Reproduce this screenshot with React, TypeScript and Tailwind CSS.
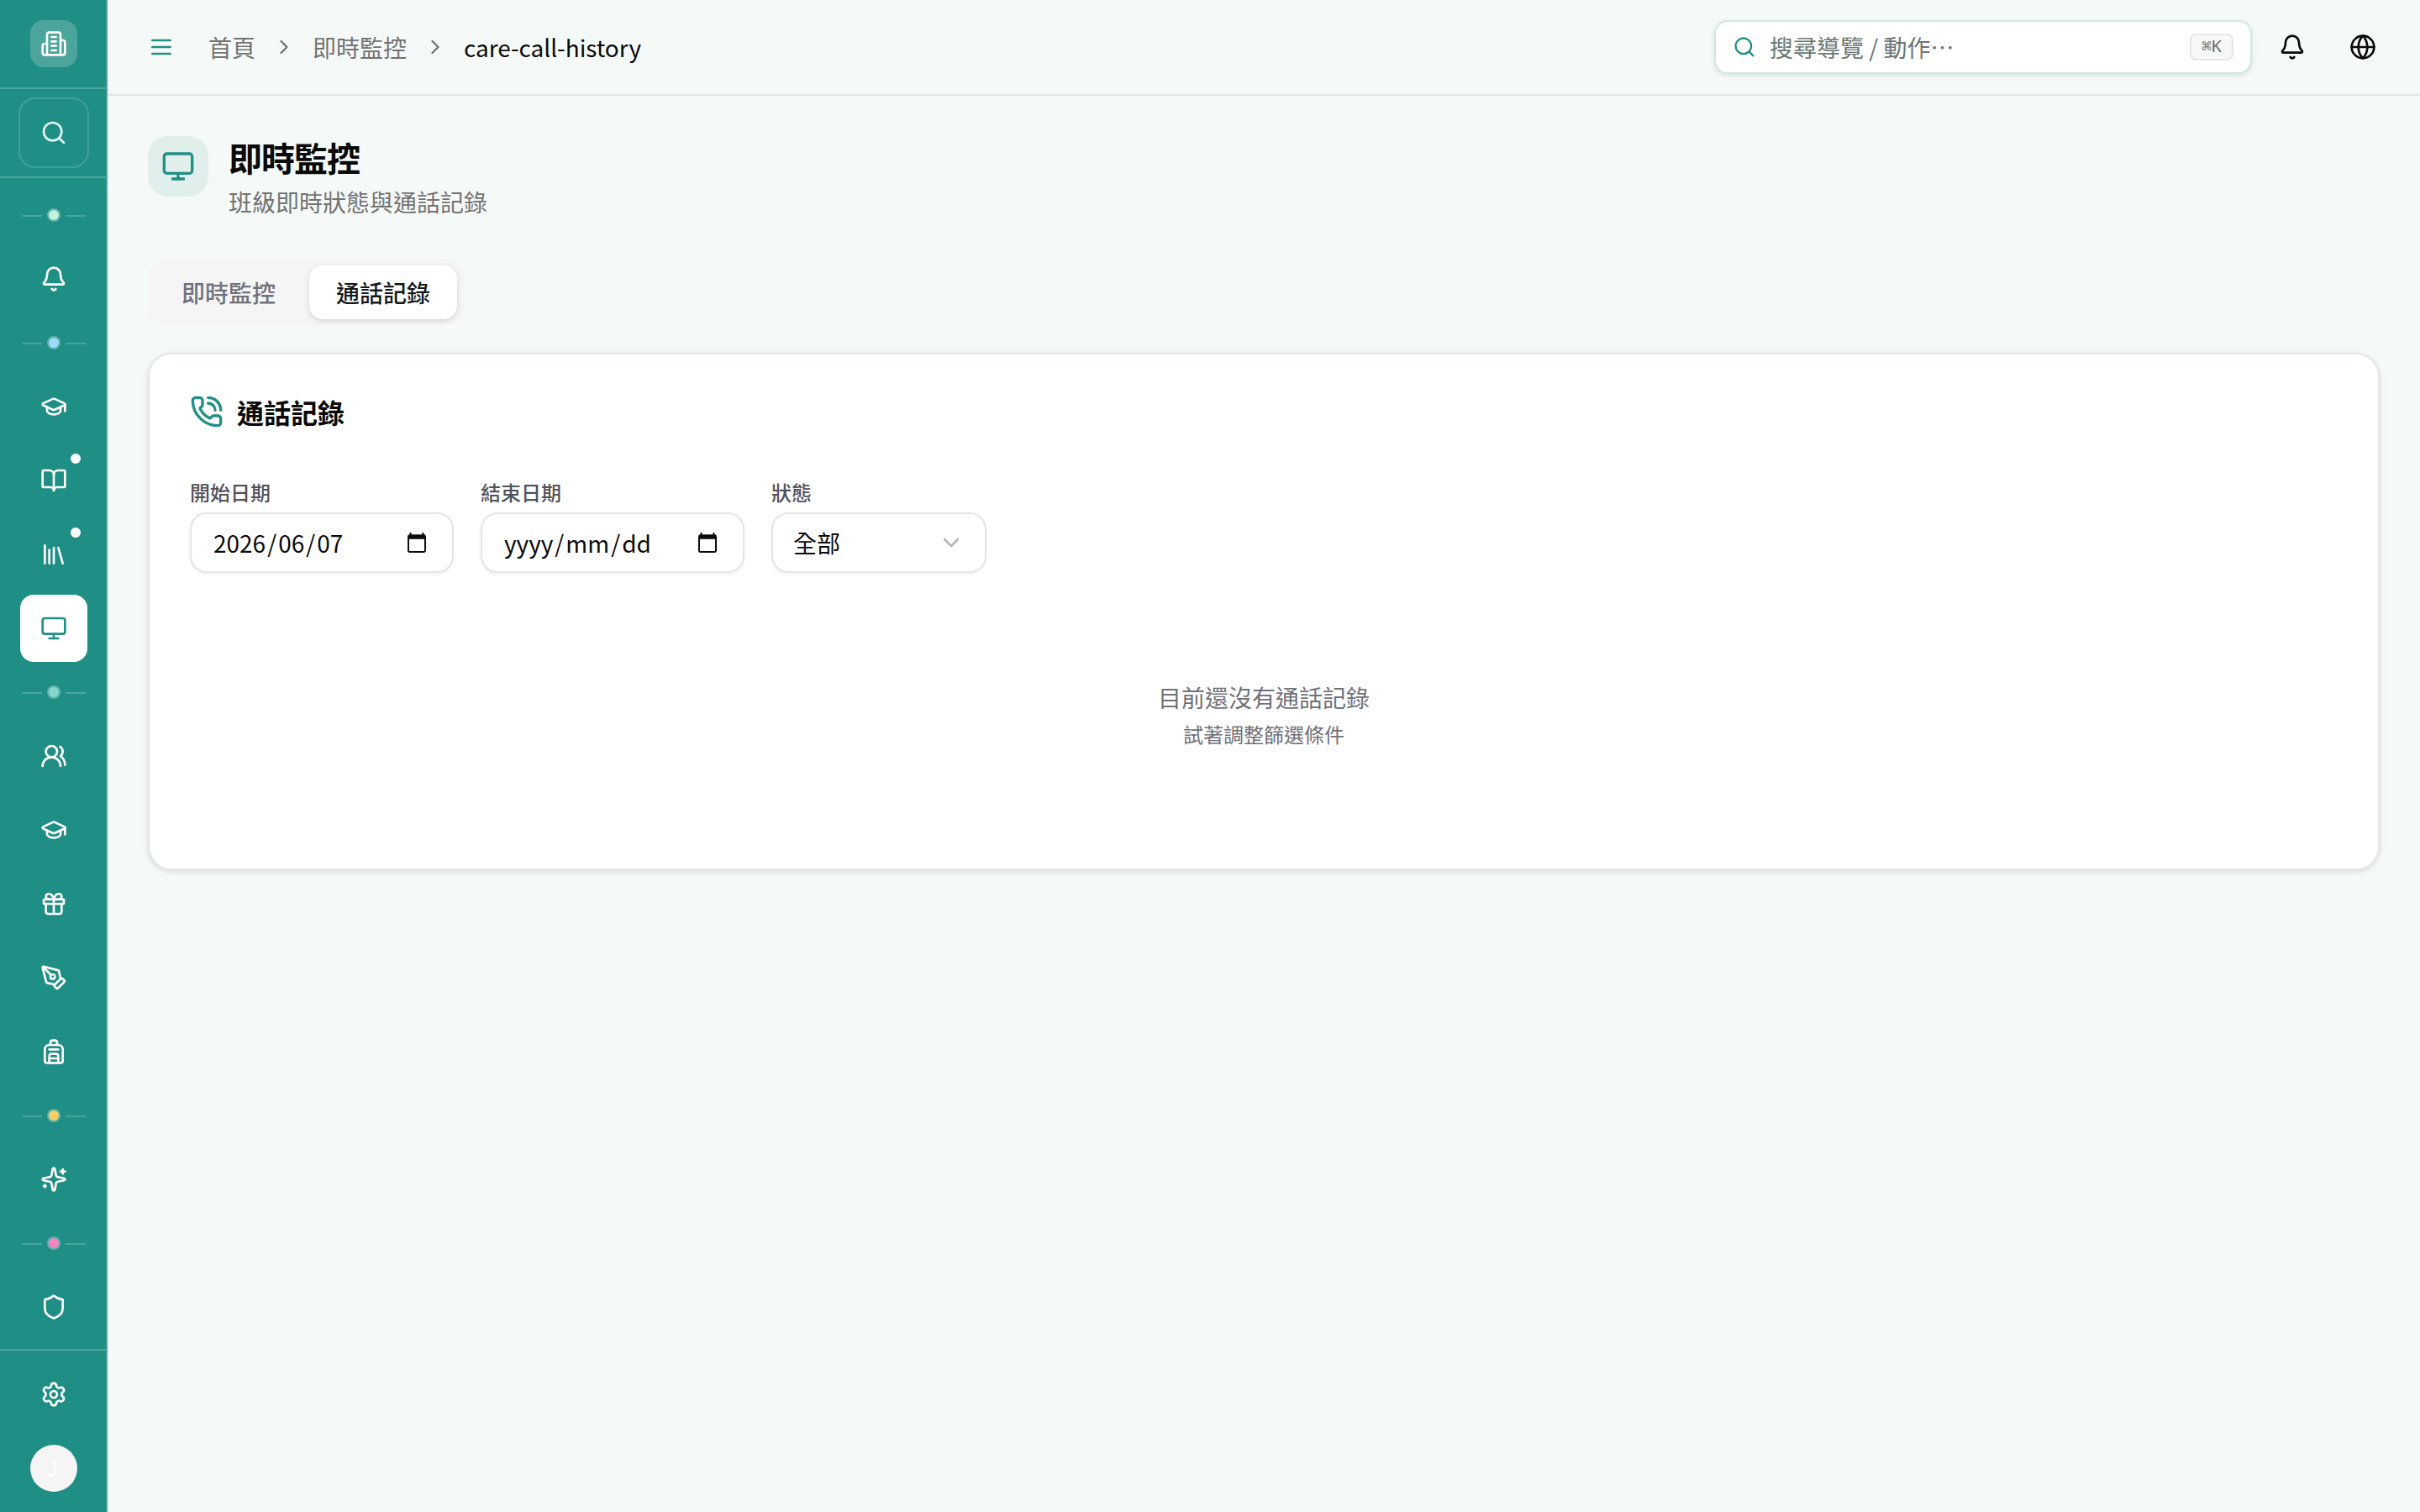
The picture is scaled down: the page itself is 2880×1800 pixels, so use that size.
import React from "react";
import {
  Backpack,
  Bell,
  BookOpen,
  ChevronDown,
  ChevronRight,
  Gift,
  Globe,
  Monitor,
  Search,
  Shield,
} from "lucide-react";

function Glyph({ className = "size-8", children }: { className?: string; children: React.ReactNode }) {
  return (
    <svg
      className={className}
      viewBox="0 0 24 24"
      fill="none"
      stroke="currentColor"
      strokeWidth={2}
      strokeLinecap="round"
      strokeLinejoin="round"
    >
      {children}
    </svg>
  );
}

const Building = () => (
  <Glyph>
    <path d="M6 22V4a2 2 0 0 1 2-2h8a2 2 0 0 1 2 2v18Z" />
    <path d="M6 12H4a2 2 0 0 0-2 2v6a2 2 0 0 0 2 2h2" />
    <path d="M18 9h2a2 2 0 0 1 2 2v9a2 2 0 0 1-2 2h-2" />
    <path d="M10 6h4M10 10h4M10 14h4M10 18h4" />
  </Glyph>
);

const Hat = () => (
  <Glyph>
    <path d="M21.42 10.922a1 1 0 0 0-.019-1.838L12.83 5.18a2 2 0 0 0-1.66 0L2.6 9.08a1 1 0 0 0 0 1.832l8.57 3.908a2 2 0 0 0 1.66 0z" />
    <path d="M22 10v6" />
    <path d="M6 12.5V16a6 3 0 0 0 12 0v-3.5" />
  </Glyph>
);

const Library = () => (
  <Glyph>
    <path d="m16 6 4 14" />
    <path d="M12 6v14" />
    <path d="M8 8v12" />
    <path d="M4 4v16" />
  </Glyph>
);

const Users = () => (
  <Glyph>
    <path d="M18 21a8 8 0 0 0-16 0" />
    <circle cx="10" cy="8" r="5" />
    <path d="M22 20c0-3.37-2-6.5-4-8a5 5 0 0 0-.45-8.3" />
  </Glyph>
);

const Pen = () => (
  <Glyph>
    <path d="M15.707 21.293a1 1 0 0 1-1.414 0l-1.586-1.586a1 1 0 0 1 0-1.414l5.586-5.586a1 1 0 0 1 1.414 0l1.586 1.586a1 1 0 0 1 0 1.414z" />
    <path d="m18 13-1.375-6.874a1 1 0 0 0-.746-.776L3.235 2.028a1 1 0 0 0-1.207 1.207L5.35 15.879a1 1 0 0 0 .776.746L13 18" />
    <path d="m2.3 2.3 7.286 7.286" />
    <circle cx="11" cy="11" r="2" />
  </Glyph>
);

const Sparkle = () => (
  <Glyph>
    <path d="M11.017 2.814a1 1 0 0 1 1.966 0l1.051 5.558a2 2 0 0 0 1.594 1.594l5.558 1.051a1 1 0 0 1 0 1.966l-5.558 1.051a2 2 0 0 0-1.594 1.594l-1.051 5.558a1 1 0 0 1-1.966 0l-1.051-5.558a2 2 0 0 0-1.594-1.594l-5.558-1.051a1 1 0 0 1 0-1.966l5.558-1.051a2 2 0 0 0 1.594-1.594z" />
    <path d="M20 3v4M22 5h-4" />
    <path d="M4 17v2M5 18H3" />
  </Glyph>
);

const Gear = () => (
  <Glyph>
    <path d="M9.671 4.136a2.34 2.34 0 0 1 4.659 0 2.34 2.34 0 0 0 3.319 1.915 2.34 2.34 0 0 1 2.33 4.033 2.34 2.34 0 0 0 0 3.831 2.34 2.34 0 0 1-2.33 4.033 2.34 2.34 0 0 0-3.319 1.915 2.34 2.34 0 0 1-4.659 0 2.34 2.34 0 0 0-3.32-1.915 2.34 2.34 0 0 1-2.33-4.033 2.34 2.34 0 0 0 0-3.831A2.34 2.34 0 0 1 6.35 6.051a2.34 2.34 0 0 0 3.319-1.915" />
    <circle cx="12" cy="12" r="3" />
  </Glyph>
);

const PhoneCall = () => (
  <Glyph className="size-10 text-[#218f84]">
    <path d="M13 2a9 9 0 0 1 9 9" />
    <path d="M13 6a5 5 0 0 1 5 5" />
    <path d="M13.832 16.568a1 1 0 0 0 1.213-.303l.355-.465A2 2 0 0 1 17 15h3a2 2 0 0 1 2 2v3a2 2 0 0 1-2 2A18 18 0 0 1 2 4a2 2 0 0 1 2-2h3a2 2 0 0 1 2 2v3a2 2 0 0 1-.8 1.6l-.468.351a1 1 0 0 0-.292 1.233 14 14 0 0 0 6.392 6.384" />
  </Glyph>
);

function Item({ children, active, badge }: { children: React.ReactNode; active?: boolean; badge?: boolean }) {
  return (
    <div
      className={
        active
          ? "relative flex size-20 items-center justify-center rounded-2xl bg-white text-[#218f84]"
          : "relative flex size-20 items-center justify-center rounded-2xl text-white"
      }
    >
      {children}
      {badge && <span className="absolute top-2 right-2 size-3 rounded-full bg-white" />}
    </div>
  );
}

function Divider({ color }: { color: string }) {
  return (
    <div className="flex h-4 items-center justify-center gap-1.5">
      <span className="mt-0.5 h-0.5 w-6 bg-white/20" />
      <span className="flex size-4 items-center justify-center rounded-full bg-white/30">
        <span className={"size-3 rounded-full " + color} />
      </span>
      <span className="mt-0.5 h-0.5 w-6 bg-white/20" />
    </div>
  );
}

function Sidebar() {
  return (
    <aside className="flex h-full w-32 shrink-0 flex-col border-r-2 border-[#4ba59d] bg-[#1f8f85]">
      <div className="flex h-[106px] items-start justify-center border-b-2 border-white/20 pt-6 pl-0.5">
        <div className="flex size-14 items-center justify-center rounded-2xl bg-white/20 text-white">
          <Building />
        </div>
      </div>
      <div className="flex h-[106px] items-start justify-center border-b-2 border-white/20 pt-2.5 pl-0.5">
        <div className="flex size-[84px] items-center justify-center rounded-[20px] border-2 border-white/15 text-[#dcf5f0]">
          <Search className="size-8" />
        </div>
      </div>
      <nav className="flex flex-1 flex-col items-center gap-7 pt-9 pl-0.5">
        <Divider color="bg-[#c1f2e0]" />
        <Item><Bell className="size-8" /></Item>
        <Divider color="bg-[#9bdcfb]" />
        <div className="flex flex-col gap-2">
          <Item><Hat /></Item>
          <Item badge><BookOpen className="size-8" /></Item>
          <Item badge><Library /></Item>
          <Item active><Monitor className="size-8" /></Item>
        </div>
        <Divider color="bg-[#84d5cc]" />
        <div className="flex flex-col gap-2">
          <Item><Users /></Item>
          <Item><Hat /></Item>
          <Item><Gift className="size-8" /></Item>
          <Item><Pen /></Item>
          <Item><Backpack className="size-8" /></Item>
        </div>
        <Divider color="bg-[#fad163]" />
        <Item><Sparkle /></Item>
        <Divider color="bg-[#f584c0]" />
        <Item><Shield className="size-8" /></Item>
      </nav>
      <div className="flex h-[194px] flex-col items-center gap-5 border-t-2 border-white/20 pt-3 pl-0.5">
        <Item><Gear /></Item>
        <div className="flex size-14 items-center justify-center rounded-full bg-[#f5f5f5] pr-1 text-2xl font-medium text-white">
          J
        </div>
      </div>
    </aside>
  );
}

function TopBar() {
  return (
    <header className="flex h-[114px] shrink-0 items-center border-b-2 border-[#e1e6e5] bg-[#f5faf9] pr-8 pl-12">
      <Glyph className="size-8 text-[#218f84]">
        <path d="M4 6h16M4 12h16M4 18h16" />
      </Glyph>
      <nav className="ml-10 flex items-center gap-5 text-[28px] leading-10 text-[#737373]">
        <span>首頁</span>
        <ChevronRight className="size-7" />
        <span>即時監控</span>
        <ChevronRight className="size-7" />
        <span className="tracking-[-0.05px] text-[#0a0a0a]">care-call-history</span>
      </nav>
      <div className="ml-auto flex items-center gap-3">
        <div className="flex h-16 w-[640px] items-center gap-4 rounded-2xl border-2 border-[#cfe9e3] bg-white px-5 shadow-[0_2px_6px_rgba(0,0,0,0.1)]">
          <Search className="size-7 text-[#218f84]" />
          <span className="flex-1 text-[28px] leading-10 text-[#6b7774]">搜尋導覽 / 動作⋯</span>
          <kbd className="flex h-8 w-[52px] items-center justify-center rounded-lg border-2 border-[#e5e7e6] bg-[#f6f8f7] pb-0.5 font-['DejaVu_Sans_Mono',monospace] text-xl leading-none text-[#737373]">
            ⌘K
          </kbd>
        </div>
        <div className="flex size-[72px] items-center justify-center text-[#0a0a0a]">
          <Bell className="size-8" />
        </div>
        <div className="flex size-[72px] items-center justify-center text-[#0a0a0a]">
          <Globe className="size-8" />
        </div>
      </div>
    </header>
  );
}

function CalendarMark() {
  return (
    <svg className="h-6 w-[22px]" viewBox="0 0 22 24" fill="none">
      <path d="M2.6 0h2v3.2h-2zM17.4 0h2v3.2h-2z" fill="#0a0a0a" />
      <rect x="1" y="3.4" width="20" height="19.5" rx="1.4" stroke="#0a0a0a" strokeWidth="2" />
      <path d="M1 2.6h20v5.2H1z" fill="#0a0a0a" />
    </svg>
  );
}

function DateField({ label, parts }: { label: string; parts: [string, string, string] }) {
  return (
    <div className="flex w-[314px] flex-col">
      <span className="text-2xl leading-8 font-medium text-[#52525b]">{label}</span>
      <div className="mt-2 flex h-[72px] items-center justify-between rounded-[20px] border-2 border-[#e5e5e5] bg-white pr-[31px] pl-[26px] text-[28px] leading-10 text-[#0a0a0a] shadow-[0_2px_4px_rgba(0,0,0,0.05)]">
        <div className="flex gap-0.5">
          <span>{parts[0]}</span>
          <span>/</span>
          <span>{parts[1]}</span>
          <span>/</span>
          <span>{parts[2]}</span>
        </div>
        <CalendarMark />
      </div>
    </div>
  );
}

export default function App() {
  return (
    <div
      lang="zh-Hant"
      className="flex h-[1800px] w-[2880px] overflow-hidden bg-[#f5f9f8] font-['Noto_Sans_CJK_TC',sans-serif] text-[#0a0a0a]"
    >
      <Sidebar />
      <div className="flex min-w-0 flex-1 flex-col">
        <TopBar />
        <main className="flex flex-1 flex-col px-12 pt-12">
          <div className="flex items-start gap-6">
            <div className="flex size-[72px] items-center justify-center rounded-3xl bg-[#e0eeec] text-[#218f84]">
              <Monitor className="size-10" />
            </div>
            <div className="flex flex-col">
              <h1 className="text-[40px] leading-[50px] font-bold tracking-tight">即時監控</h1>
              <p className="mt-2 text-[28px] leading-10 text-[#737373]">班級即時狀態與通話記錄</p>
            </div>
          </div>

          <div className="mt-12 flex h-20 w-[376px] items-center gap-2 rounded-3xl bg-[#f5f5f5] p-2 text-[28px] leading-10 font-medium">
            <div className="flex h-16 flex-1 items-center justify-center rounded-2xl text-[#71717a]">即時監控</div>
            <div className="flex h-16 flex-1 items-center justify-center rounded-2xl bg-white text-[#18181b] shadow-[0_2px_6px_rgba(0,0,0,0.14)]">
              通話記錄
            </div>
          </div>

          <section className="mt-8 flex h-[616px] flex-col rounded-[28px] border-2 border-[#e4e7e6] bg-white px-12 pt-12 shadow-[0_2px_6px_rgba(0,0,0,0.12)]">
            <div className="flex items-center gap-4">
              <PhoneCall />
              <h2 className="text-[32px] leading-10 font-bold">通話記錄</h2>
            </div>
            <div className="mt-[60px] flex gap-8">
              <DateField label="開始日期" parts={["2026", "06", "07"]} />
              <DateField label="結束日期" parts={["yyyy", "mm", "dd"]} />
              <div className="flex w-64 flex-col">
                <span className="text-2xl leading-8 font-medium text-[#52525b]">狀態</span>
                <div className="mt-2 flex h-[72px] items-center justify-between rounded-[20px] border-2 border-[#e5e5e5] bg-white px-6 text-[28px] leading-10 shadow-[0_2px_4px_rgba(0,0,0,0.05)]">
                  <span>全部</span>
                  <ChevronDown className="size-8 text-[#b5b5b5]" />
                </div>
              </div>
            </div>
            <div className="mt-[128px] flex flex-col items-center text-[#71717a]">
              <p className="text-[28px] leading-10">目前還沒有通話記錄</p>
              <p className="mt-2 text-2xl leading-8">試著調整篩選條件</p>
            </div>
          </section>
        </main>
      </div>
    </div>
  );
}
